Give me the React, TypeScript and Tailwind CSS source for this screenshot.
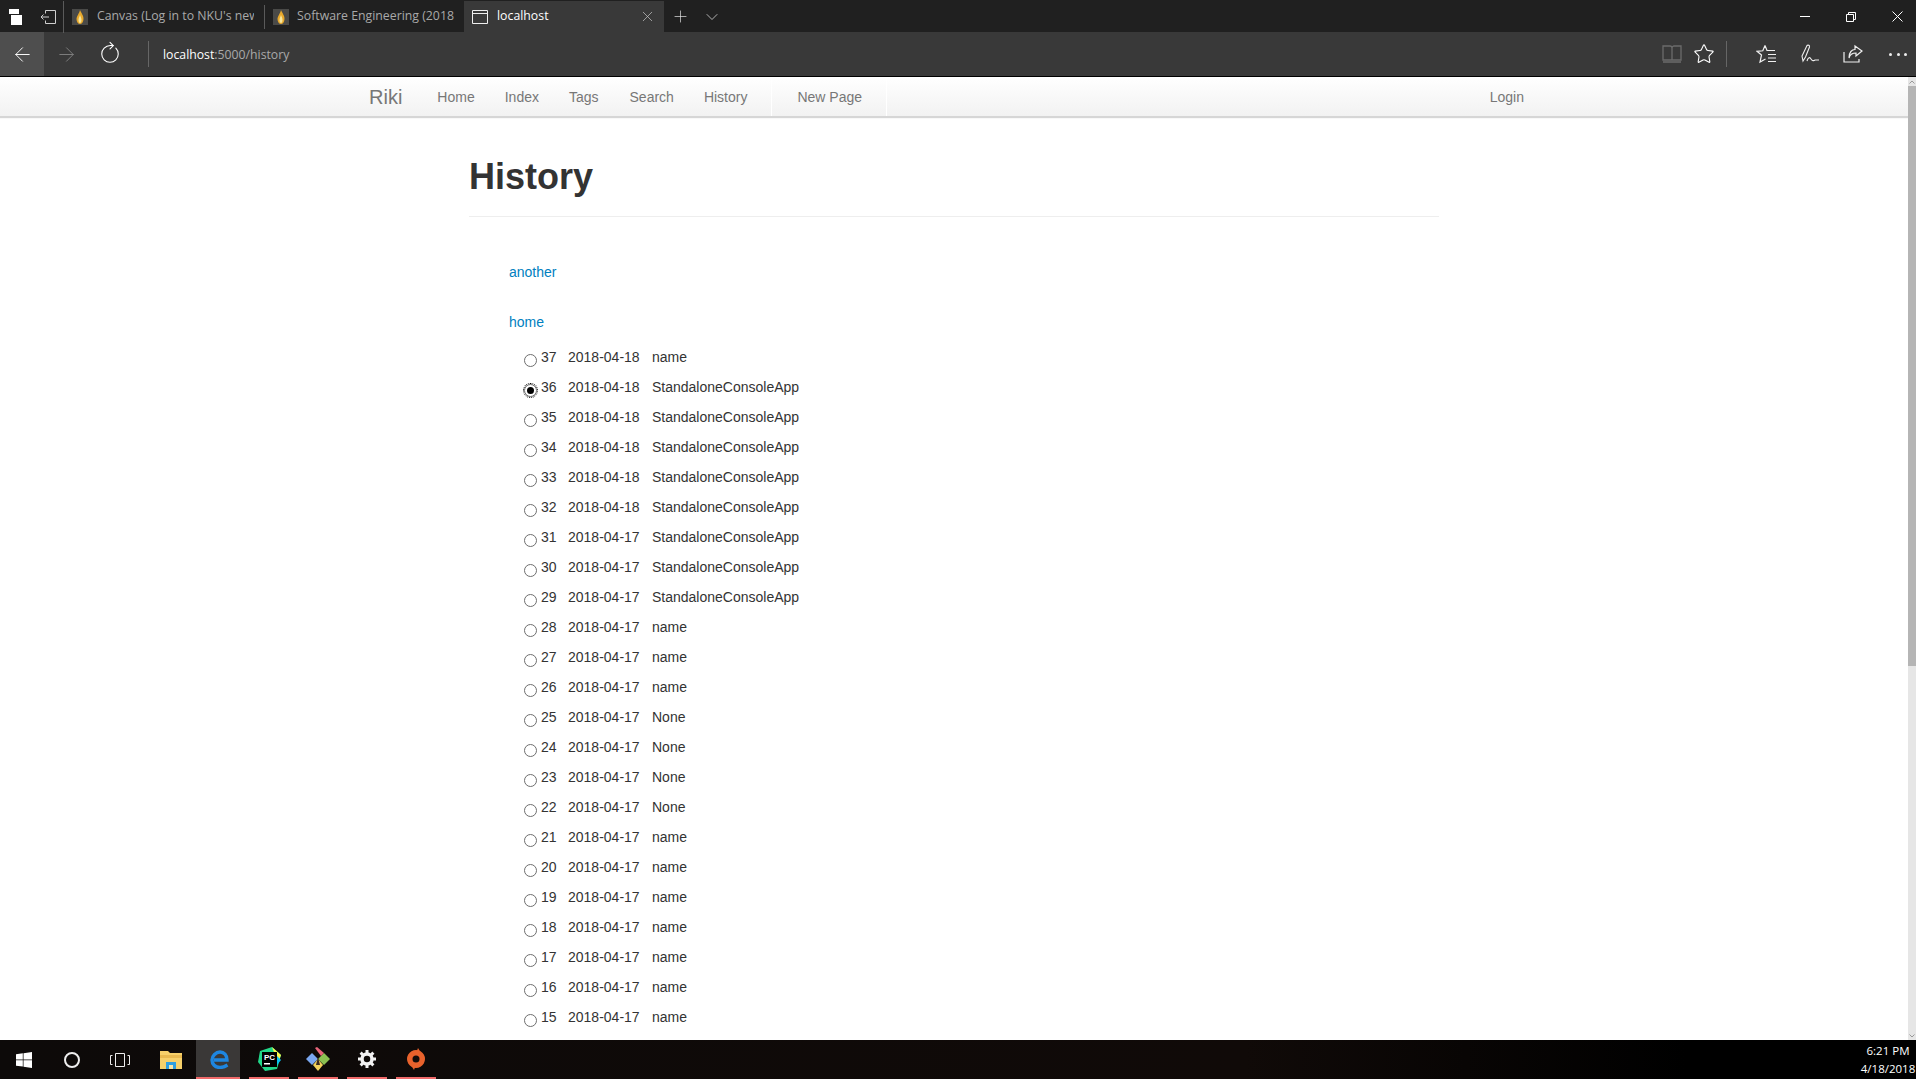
import { ArrowLeft, ArrowRight, X, Plus, ChevronDown, Star, RotateCw } from "lucide-react";

const rows: [number, string, string][] = [
  [37, "2018-04-18", "name"],
  [36, "2018-04-18", "StandaloneConsoleApp"],
  [35, "2018-04-18", "StandaloneConsoleApp"],
  [34, "2018-04-18", "StandaloneConsoleApp"],
  [33, "2018-04-18", "StandaloneConsoleApp"],
  [32, "2018-04-18", "StandaloneConsoleApp"],
  [31, "2018-04-17", "StandaloneConsoleApp"],
  [30, "2018-04-17", "StandaloneConsoleApp"],
  [29, "2018-04-17", "StandaloneConsoleApp"],
  [28, "2018-04-17", "name"],
  [27, "2018-04-17", "name"],
  [26, "2018-04-17", "name"],
  [25, "2018-04-17", "None"],
  [24, "2018-04-17", "None"],
  [23, "2018-04-17", "None"],
  [22, "2018-04-17", "None"],
  [21, "2018-04-17", "name"],
  [20, "2018-04-17", "name"],
  [19, "2018-04-17", "name"],
  [18, "2018-04-17", "name"],
  [17, "2018-04-17", "name"],
  [16, "2018-04-17", "name"],
  [15, "2018-04-17", "name"],
];

function Flame() {
  return (
    <svg width="16" height="16" viewBox="0 0 16 16" className="shrink-0">
      <rect width="16" height="16" fill="#4a4a48" />
      <path d="M8 1c1 3 3.500 5 3.500 9 0 3-1.800 5-3.500 5s-3.500-2-3.500-5C4.500 7 7 5 8 1z" fill="#e8a92c" />
      <path d="M8 6c.6 2 1.500 3 1.500 5 0 2-.8 3-1.500 3s-1.500-1-1.500-3c0-2 1-3 1.500-5z" fill="#f7e7a0" />
    </svg>
  );
}

function TabBar() {
  return (
    <div className="flex h-8 shrink-0 items-center bg-[#202020] pt-px text-[12.3px] text-[#a9a9a9]">
      <div className="flex h-8 w-8 items-center justify-center">
        <svg width="16" height="18" viewBox="0 0 16 18">
          <rect x="1" y="1" width="10" height="5" fill="#fff" />
          <rect x="3" y="7" width="11" height="10" fill="#fff" />
        </svg>
      </div>
      <div className="flex h-8 w-[31px] items-center justify-center">
        <svg width="16" height="14" viewBox="0 0 16 14" fill="none" stroke="#cfcfcf">
          <path d="M5.500 3.500v-3h10v13h-10v-3M1 7h8M3.500 4.500L1 7l2.500 2.500" />
        </svg>
      </div>
      <div className="h-8 w-px bg-[#5a5a5a]" />
      <div className="flex h-8 w-[200px] items-center pl-2">
        <Flame />
        <span className="ml-[9px] w-[157px] overflow-hidden whitespace-nowrap">Canvas (Log in to NKU's new</span>
      </div>
      <div className="h-6 w-px bg-[#5a5a5a]" />
      <div className="flex h-8 w-[199px] items-center pl-2">
        <Flame />
        <span className="ml-2 w-[160px] overflow-hidden whitespace-nowrap">Software Engineering (2018</span>
      </div>
      <div className="flex h-8 w-[200px] items-center bg-[#393939] pl-2 text-white">
        <svg width="16" height="14" viewBox="0 0 16 14" fill="none" stroke="#eee" className="shrink-0">
          <path d="M.5.500h15v13H.5zM.5 3.500h15" />
        </svg>
        <span className="ml-[9px]">localhost</span>
        <X className="ml-auto mr-2 text-[#c8c8c8]" size={17} strokeWidth={1} />
      </div>
      <div className="flex h-8 w-8 items-center justify-center">
        <Plus size={19} strokeWidth={0.9} className="text-[#e0e0e0]" />
      </div>
      <div className="flex h-8 w-8 items-center justify-center">
        <ChevronDown size={20} strokeWidth={0.9} className="text-[#e0e0e0]" />
      </div>
      <div className="ml-auto flex items-center pr-[13px] text-white">
        <div className="h-px w-[10px] bg-white" />
        <svg width="10" height="10" viewBox="0 0 10 10" fill="none" stroke="#fff" className="ml-9">
          <path d="M2.500 2.500V.5h7v7h-2M.5 2.500h7v7h-7z" />
        </svg>
        <svg width="11" height="11" viewBox="0 0 11 11" fill="none" stroke="#fff" className="ml-9">
          <path d="M.5.500l10 10M10.500.5l-10 10" />
        </svg>
      </div>
    </div>
  );
}

function Toolbar() {
  return (
    <div className="flex h-11 shrink-0 items-center bg-[#393939] text-[12.25px]">
      <div className="flex h-11 w-11 items-center justify-center bg-[#4e4e4e]">
        <ArrowLeft size={23} strokeWidth={1} className="text-white" />
      </div>
      <div className="flex h-11 w-11 items-center justify-center">
        <ArrowRight size={23} strokeWidth={1} className="text-[#808080]" />
      </div>
      <div className="flex h-11 w-11 items-center justify-center">
        <RotateCw size={22} strokeWidth={1.2} className="-rotate-45 text-white" />
      </div>
      <div className="ml-4 h-[26px] w-px bg-[#666]" />
      <div className="ml-[14px] whitespace-nowrap pt-[2px] text-[#a9a9a9]">
        <span className="text-white">localhost</span>:5000/history
      </div>
      <div className="ml-auto flex items-center pr-[9px]">
        <svg width="20" height="18" viewBox="0 0 20 18" fill="none" stroke="#6b6b6b" strokeWidth="1.300">
          <path d="M1 1h7c1 0 2 1 2 2 0-1 1-2 2-2h7v14h-18zM10 3v12M1 17h18" />
        </svg>
        <Star size={22} strokeWidth={1.2} className="ml-[11px] text-white" />
        <div className="ml-[11px] h-[26px] w-px bg-[#666]" />
        <svg width="20" height="20" viewBox="0 0 20 20" fill="none" stroke="#f0f0f0" strokeWidth="1.200" className="ml-[29px]">
          <path d="M9 1.500L11 6.500H19M9 1.500L6.800 6.800L1 7.300L5.500 11L4 18L9.500 15M12 10.500h8M12 14h8M12 17.500h8" />
        </svg>
        <svg width="20" height="20" viewBox="0 0 20 20" fill="none" stroke="#f0f0f0" strokeWidth="1.100" className="ml-[25px]">
          <path d="M2 17L1 12 6 1.500c1-1 3 0 2.500 1.500L4.500 13 2 17zM6 17c1-4 3-4 4-2 1 2 3 2 4 1h4" />
        </svg>
        <svg width="20" height="20" viewBox="0 0 20 20" fill="none" stroke="#f0f0f0" strokeWidth="1.200" className="ml-[22px]">
          <path d="M1 8v10h15v-3M12 2l7 5-6 5V9c-3 0-6 1-7 5 0-6 3-8.500 6-8.500z" />
        </svg>
        <div className="ml-[26px] flex w-[18px] justify-between">
          <div className="h-[3px] w-[3px] rounded-full bg-[#eee]" />
          <div className="h-[3px] w-[3px] rounded-full bg-[#eee]" />
          <div className="h-[3px] w-[3px] rounded-full bg-[#eee]" />
        </div>
      </div>
    </div>
  );
}

function Nav() {
  return (
    <div className="h-[39px] shrink-0 bg-gradient-to-b from-white to-[#f2f2f2] shadow-[0_2px_1px_rgba(0,0,0,0.16)]">
      <div className="mx-auto flex h-full w-[1170px] items-center text-sm text-[#777]">
        <span className="mr-[35px] text-xl">Riki</span>
        <span>Home</span>
        <span className="ml-[30px]">Index</span>
        <span className="ml-[30px]">Tags</span>
        <span className="ml-[31px]">Search</span>
        <span className="ml-[30px]">History</span>
        <div className="ml-[24px] flex h-full w-[116px] items-center border-x border-x-white pl-[25px]">New Page</div>
        <span className="ml-auto mr-[15px]">Login</span>
      </div>
    </div>
  );
}

function Radio({ checked }: { checked: boolean }) {
  return (
    <div className={`mt-[12px] flex h-[13px] w-[13px] shrink-0 items-center justify-center rounded-full border border-[#6e6e6e] bg-white ${checked ? "outline-1 outline-dotted outline-black" : ""}`}>
      {checked && <div className="h-[7px] w-[7px] rounded-full bg-black" />}
    </div>
  );
}

function Content() {
  return (
    <div className="mx-auto w-[970px] text-sm text-[#333]">
      <div className="border-b border-[#eee] pb-[19px] pt-[41px]">
        <h1 className="text-4xl leading-10 font-bold">History</h1>
      </div>
      <div className="ml-10 mt-[45px] leading-5 text-[#0080c0]">another</div>
      <div className="ml-10 mt-[30px] leading-5 text-[#0080c0]">home</div>
      <div className="ml-[55px] mt-[10px]">
        {rows.map(([id, date, name]) => (
          <div key={id} className="flex h-[30px] items-start leading-[30px]">
            <Radio checked={id === 36} />
            <span className="ml-[4px] w-[27px]">{id}</span>
            <span className="w-[84px]">{date}</span>
            <span>{name}</span>
          </div>
        ))}
      </div>
    </div>
  );
}

function Scrollbar() {
  return (
    <div className="flex w-2 shrink-0 flex-col bg-[#e6e6e6]">
      <div className="flex h-[9px] items-center justify-center text-[#999]">
        <svg width="6" height="4" viewBox="0 0 6 4" fill="none" stroke="currentColor"><path d="M.5 3.500L3 1l2.500 2.500" /></svg>
      </div>
      <div className="h-[580px] bg-[#b5b5b5]" />
      <div className="mt-auto flex h-[9px] items-center justify-center text-[#999]">
        <svg width="6" height="4" viewBox="0 0 6 4" fill="none" stroke="currentColor"><path d="M.5.500L3 3l2.500-2.500" /></svg>
      </div>
    </div>
  );
}

function Taskbar() {
  return (
    <div className="flex h-[39px] shrink-0 items-center bg-[linear-gradient(90deg,#0d0a09_0%,#100a08_65%,#000_88%)] text-[11.5px] text-white">
      <div className="flex h-full w-12 items-center justify-center">
        <svg width="16" height="16" viewBox="0 0 16 16" fill="#fff">
          <path d="M0 2.300l6.800-1v6.200H0zM7.500 1.200L16 0v7.500H7.500zM0 8.300h6.800v6.300L0 13.700zM7.500 8.300H16V16l-8.500-1.200z" />
        </svg>
      </div>
      <div className="flex h-full w-12 items-center justify-center">
        <div className="h-4 w-4 rounded-full border-2 border-[#eee]" />
      </div>
      <div className="flex h-full w-12 items-center justify-center">
        <svg width="20" height="14" viewBox="0 0 20 14" fill="none" stroke="#eee">
          <path d="M5.500.5h9v13h-9zM2.500 2.500h-2v9h2M17.500 2.500h2v9h-2" />
        </svg>
      </div>
      <div className="ml-1 flex h-full w-12 items-center justify-center pr-[2px]">
        <svg width="22" height="18" viewBox="0 0 22 18">
          <path d="M0 0h8l2 2h12v16H0z" fill="#f6d06a" />
          <path d="M0 4h22v3H0z" fill="#e8b94f" />
          <path d="M6 11h10v7H6z" fill="#2f9fe0" />
          <path d="M9 14h4v4H9z" fill="#f6e5a8" />
        </svg>
      </div>
      <div className="flex h-full w-11 items-center justify-center border-b-2 border-[#f06a6a] bg-[#3a3837] pl-1">
        <svg width="20" height="20" viewBox="0 0 20 20" fill="none" stroke="#1e86e0" strokeWidth="3.400">
          <path d="M4 11h13c0-5-3-8-7-8S2 7 2 11s3 7.500 8 7.500c3 0 5-1 7.500-2.500" />
        </svg>
      </div>
      <div className="ml-[9px] flex h-full w-10 items-center justify-center border-b-2 border-[#f06a6a]">
        <svg width="23" height="24" viewBox="0 0 23 24">
          <path d="M2 4l12-4 9 8-4 14-12 2-7-9z" fill="#21d789" />
          <path d="M14 0l9 8-3 8z" fill="#fcf84a" />
          <path d="M18 8l5 5-4 5z" fill="#07c3f2" />
          <rect x="4" y="5" width="15" height="15" fill="#000" />
          <text x="6" y="13" fill="#fff" fontSize="8" fontWeight="700" fontFamily="Liberation Sans, sans-serif">PC</text>
          <rect x="6" y="16" width="6" height="1.500" fill="#fff" />
        </svg>
      </div>
      <div className="ml-[9px] flex h-full w-10 items-center justify-center border-b-2 border-[#f06a6a]">
        <svg width="24" height="24" viewBox="0 0 24 24">
          <path d="M12 12L6 6 0 12l6 6z" fill="#7aa7f0" />
          <path d="M12 12l6-6 6 6-6 6z" fill="#8cc152" />
          <path d="M12 12l-5 6 5 6 5-6z" fill="#f2d15c" />
          <path d="M9 1l2-1 7 6-3 3z" fill="#e8657a" />
          <path d="M12 10l2 8h-4z" fill="#3a2a20" />
        </svg>
      </div>
      <div className="ml-[9px] flex h-full w-10 items-center justify-center border-b-2 border-[#f06a6a]">
        <svg width="18" height="18" viewBox="0 0 18 18">
          <circle cx="9" cy="9" r="5" fill="none" stroke="#f2f2f2" strokeWidth="3.500" />
          <path d="M9 0v4M9 14v4M0 9h4M14 9h4M2.600 2.600l2.900 2.900M12.500 12.500l2.900 2.900M15.400 2.600l-2.900 2.900M5.500 12.500l-2.900 2.900" stroke="#f2f2f2" strokeWidth="3" />
        </svg>
      </div>
      <div className="ml-[9px] flex h-full w-10 items-center justify-center border-b-2 border-[#f06a6a]">
        <svg width="18" height="22" viewBox="0 0 18 22">
          <path d="M9 2a9 9 0 1 0 .01 0z" fill="#e8622c" />
          <circle cx="9" cy="11" r="3.500" fill="#120c0a" />
          <path d="M11 0l2.500 4-4 0z M7 22l-2.500-4 4 0z" fill="#e8622c" />
        </svg>
      </div>
      <div className="ml-auto w-14 text-center leading-[18px]">
        <div>6:21 PM</div>
        <div>4/18/2018</div>
      </div>
    </div>
  );
}

export default function App() {
  return (
    <div className="flex h-screen w-full flex-col overflow-hidden bg-white font-['Liberation_Sans',Arial,sans-serif]">
      <div className="font-['Open_Sans',sans-serif]">
        <TabBar />
        <Toolbar />
      </div>
      <div className="h-px shrink-0 bg-black" />
      <div className="flex min-h-0 flex-1">
        <div className="min-w-0 flex-1 overflow-hidden">
          <Nav />
          <Content />
        </div>
        <Scrollbar />
      </div>
      <div className="font-['Open_Sans',sans-serif]">
        <Taskbar />
      </div>
    </div>
  );
}
